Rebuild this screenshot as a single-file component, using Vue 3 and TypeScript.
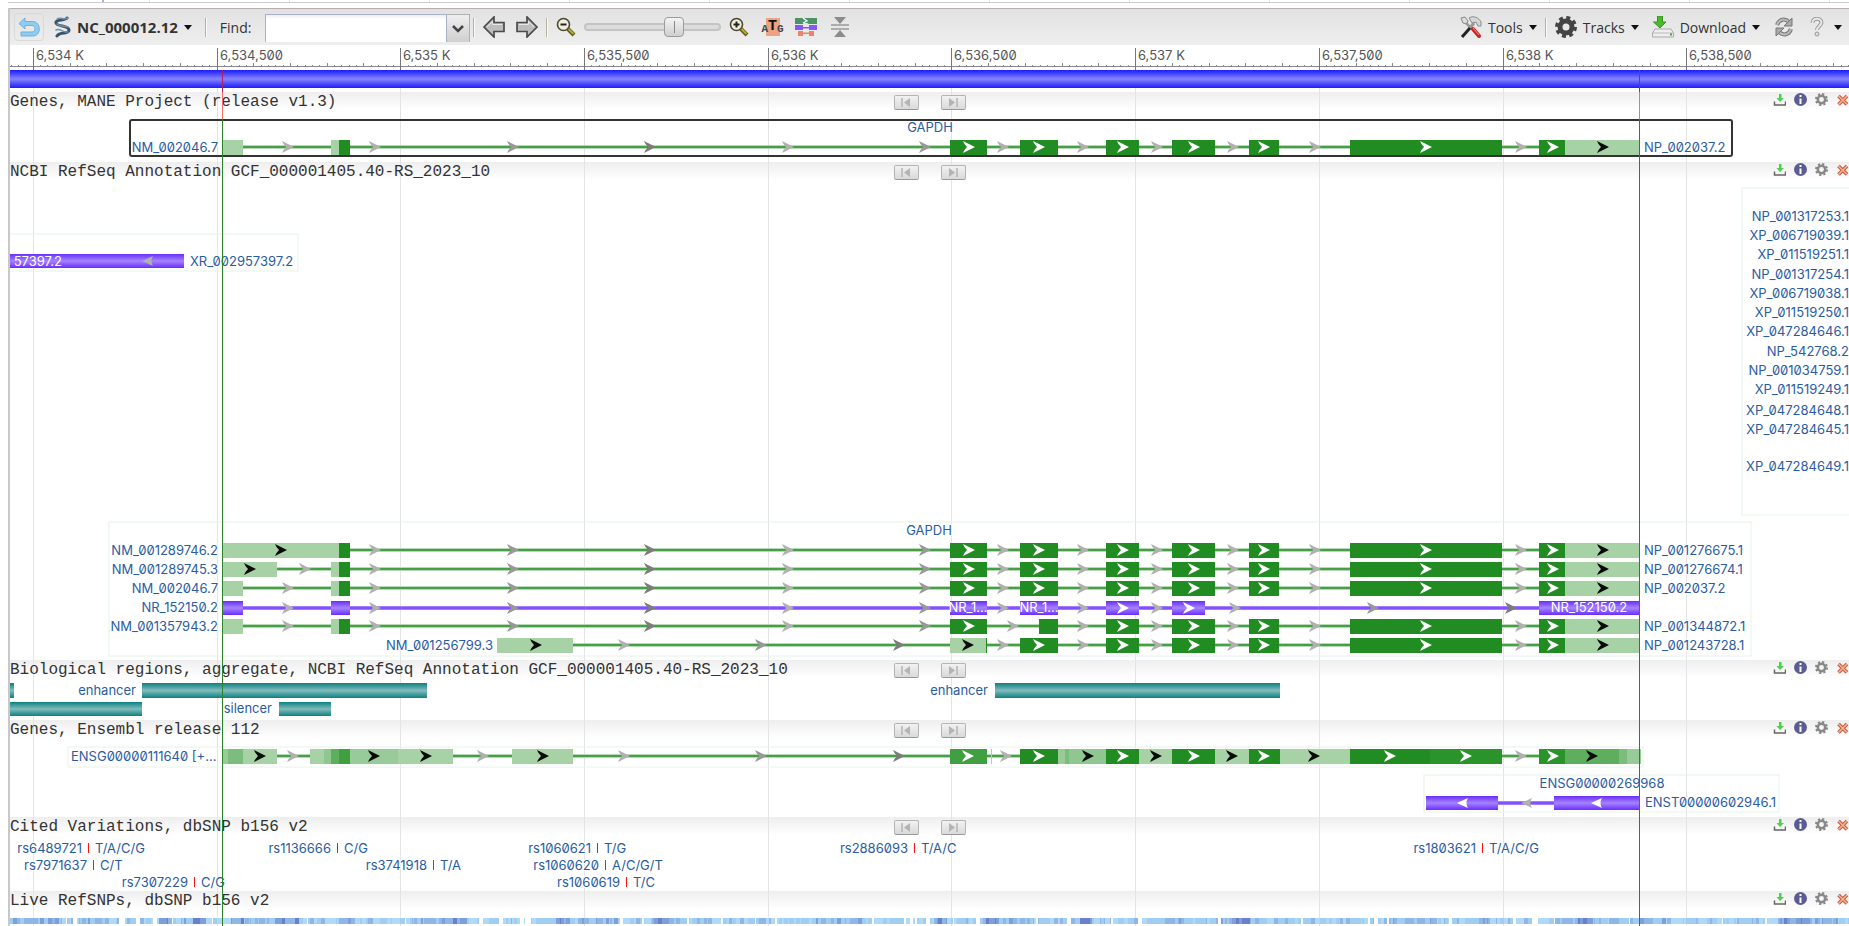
<script setup lang="ts">
import { computed, onBeforeUnmount, onMounted, ref } from 'vue'

type Fill = 'utr' | 'cds' | 'nc' | 'teal' | 'd1' | 'd2' | 'd3' | 'd4' | 'd5' | 'd6'
type ArrowKind = 'white' | 'black' | 'soft' | 'mid' | 'deep'
type Block = [from: number, to: number, fill: Fill]
type Arrow = [x: number, kind: ArrowKind]

interface Feature {
  y: number
  h: number
  line?: [number, number]
  lineKind?: 'green' | 'purple'
  back?: boolean
  blocks: Block[]
  arrows: Arrow[]
}
interface Label {
  x: number
  y: number
  text: string
  anchor?: 'start' | 'middle' | 'end'
  light?: boolean
}
interface Frame {
  x: number
  y: number
  to: number
  h: number
  strong?: boolean
}
interface Track {
  id: string
  title: string
  top: number
  body: number
  nav: boolean
  frames: Frame[]
  features: Feature[]
  labels: Label[]
  marks: { x: number; y: number }[]
}

const LEFT = 10
const BASE = 1839
const width = ref(window.innerWidth - LEFT)
const measure = () => {
  width.value = window.innerWidth - LEFT
}
onMounted(() => window.addEventListener('resize', measure))
onBeforeUnmount(() => window.removeEventListener('resize', measure))

const sx = (x: number) => Math.round(((x - LEFT) * width.value) / BASE)

const query = ref('')
const zoom = ref(69)

const rulerNames = [
  '6,534 K', '6,534,500', '6,535 K', '6,535,500', '6,536 K',
  '6,536,500', '6,537 K', '6,537,500', '6,538 K', '6,538,500',
]
const ORIGIN = 32.8
const STEP = 183.72
const majors = computed(() => rulerNames.map((name, i) => ({ name, x: sx(ORIGIN + STEP * i) })))
const minors = computed(() => {
  const out: { x: number; tall: boolean }[] = []
  for (let i = -3; i < 250; i++) {
    const x = ORIGIN + (STEP / 25) * i
    if (x > LEFT && x < LEFT + BASE) out.push({ x: sx(x), tall: i % 5 === 0 })
  }
  return out
})

const introns: Arrow[] = [[369, 'soft'], [507, 'mid'], [644, 'deep'], [782, 'soft'], [919, 'mid']]
const tailBlocks: Block[] = [
  [1106, 1139, 'cds'], [1172, 1215, 'cds'], [1249, 1279, 'cds'],
  [1350, 1502, 'cds'], [1539, 1565, 'cds'], [1565, 1639, 'utr'],
]
const tailArrows: Arrow[] = [
  [1077, 'soft'], [1117, 'white'], [1151, 'soft'], [1188, 'white'], [1227, 'soft'],
  [1258, 'white'], [1309, 'soft'], [1420, 'white'], [1515, 'soft'], [1547, 'white'], [1597, 'black'],
]
const midBlocks: Block[] = [[950, 987, 'cds'], [1020, 1058, 'cds']]
const midArrows: Arrow[] = [[963, 'white'], [997, 'soft'], [1033, 'white']]
const startSplit: Block[] = [[331, 339, 'utr'], [339, 350, 'cds']]

const gene = (y: number, head: Block[], headArrows: Arrow[], mid = midBlocks, midA = midArrows): Feature => ({
  y,
  h: 15,
  line: [223, 1639],
  lineKind: 'green',
  blocks: [...head, ...mid, ...tailBlocks],
  arrows: [...headArrows, ...introns, ...midA, ...tailArrows],
})

const accession = (x: number, y: number, text: string, anchor: 'start' | 'end' = 'end'): Label => ({ x, y, text, anchor })

const edgeLabels: [number, string][] = [
  [221, 'NP_001317253.1'], [240, 'XP_006719039.1'], [259, 'XP_011519251.1'], [279, 'NP_001317254.1'],
  [298, 'XP_006719038.1'], [317, 'XP_011519250.1'], [336, 'XP_047284646.1'], [356, 'NP_542768.2'],
  [375, 'NP_001034759.1'], [394, 'XP_011519249.1'], [415, 'XP_047284648.1'], [434, 'XP_047284645.1'],
  [471, 'XP_047284649.1'],
]

const snps: [string, number, string, number][] = [
  ['rs6489721', 88, 'T/A/C/G', 0], ['rs7971637', 93, 'C/T', 1], ['rs7307229', 194, 'C/G', 2],
  ['rs1136666', 337, 'C/G', 0], ['rs3741918', 433, 'T/A', 1], ['rs1060621', 597, 'T/G', 0],
  ['rs1060620', 605, 'A/C/G/T', 1], ['rs1060619', 626, 'T/C', 2], ['rs2886093', 914, 'T/A/C', 0],
  ['rs1803621', 1482, 'T/A/C/G', 0],
]
const snpRows = [853, 870, 887]

const tracks: Track[] = [
  {
    id: 'mane', title: 'Genes, MANE Project (release v1.3)', top: 110, body: 52, nav: true,
    frames: [{ x: 130, y: 120, to: 1732, h: 36, strong: true }],
    features: [gene(140, [[223, 243, 'utr'], ...startSplit], [[282, 'soft']])],
    labels: [
      { x: 930, y: 132, text: 'GAPDH', anchor: 'middle' },
      accession(218, 152, 'NM_002046.7'), accession(1644, 152, 'NP_002037.2', 'start'),
    ],
    marks: [],
  },
  {
    id: 'refseq', title: 'NCBI RefSeq Annotation GCF_000001405.40-RS_2023_10', top: 180, body: 480, nav: true,
    frames: [
      { x: 0, y: 234, to: 298, h: 37 },
      { x: 109, y: 522, to: 1751, h: 134 },
      { x: 1742, y: 188, to: 1860, h: 327 },
    ],
    features: [
      { y: 254, h: 14, back: true, blocks: [[10, 184, 'nc']], arrows: [[142, 'soft']] },
      gene(543, [[223, 339, 'utr'], [339, 350, 'cds']], [[275, 'black']]),
      gene(562, [[223, 277, 'utr'], ...startSplit], [[244, 'black'], [299, 'soft']]),
      gene(581, [[223, 243, 'utr'], ...startSplit], [[282, 'soft']]),
      {
        y: 601, h: 14, line: [223, 1639], lineKind: 'purple',
        blocks: [
          [223, 243, 'nc'], [331, 350, 'nc'], [950, 987, 'nc'], [1020, 1058, 'nc'],
          [1106, 1139, 'nc'], [1172, 1205, 'nc'], [1539, 1639, 'nc'],
        ],
        arrows: [
          [282, 'soft'], ...introns, [997, 'soft'], [1077, 'soft'], [1117, 'white'], [1151, 'soft'],
          [1183, 'white'], [1229, 'soft'], [1367, 'mid'], [1505, 'deep'],
        ],
      },
      gene(619, [[223, 243, 'utr'], ...startSplit], [[282, 'soft']],
        [[950, 987, 'cds'], [1039, 1058, 'cds']], [[963, 'white'], [1007, 'soft']]),
      {
        y: 638, h: 15, line: [573, 1639], lineKind: 'green',
        blocks: [[497, 573, 'utr'], [950, 986, 'utr'], [986, 987, 'cds'], [1020, 1058, 'cds'], ...tailBlocks],
        arrows: [
          [530, 'black'], [618, 'soft'], [755, 'mid'], [893, 'deep'], [962, 'black'],
          [997, 'soft'], [1033, 'white'], ...tailArrows,
        ],
      },
    ],
    labels: [
      { x: 62, y: 266, text: '57397.2', anchor: 'end', light: true },
      accession(190, 266, 'XR_002957397.2', 'start'),
      ...edgeLabels.map(([y, text]) => accession(1849, y, text)),
      { x: 929, y: 535, text: 'GAPDH', anchor: 'middle' },
      accession(218, 555, 'NM_001289746.2'), accession(218, 574, 'NM_001289745.3'),
      accession(218, 593, 'NM_002046.7'), accession(218, 612, 'NR_152150.2'),
      accession(218, 631, 'NM_001357943.2'), accession(493, 650, 'NM_001256799.3'),
      accession(1644, 555, 'NP_001276675.1', 'start'), accession(1644, 574, 'NP_001276674.1', 'start'),
      accession(1644, 593, 'NP_002037.2', 'start'), accession(1644, 631, 'NP_001344872.1', 'start'),
      accession(1644, 650, 'NP_001243728.1', 'start'),
      { x: 968, y: 612, text: 'NR_1...', anchor: 'middle', light: true },
      { x: 1039, y: 612, text: 'NR_1...', anchor: 'middle', light: true },
      { x: 1589, y: 612, text: 'NR_152150.2', anchor: 'middle', light: true },
    ],
    marks: [],
  },
  {
    id: 'bio', title: 'Biological regions, aggregate, NCBI RefSeq Annotation GCF_000001405.40-RS_2023_10',
    top: 678, body: 42, nav: true, frames: [],
    features: [
      { y: 683, h: 15, blocks: [[10, 14, 'teal'], [142, 427, 'teal'], [995, 1280, 'teal']], arrows: [] },
      { y: 702, h: 14, blocks: [[10, 142, 'teal'], [279, 331, 'teal']], arrows: [] },
    ],
    labels: [accession(136, 695, 'enhancer'), accession(272, 713, 'silencer'), accession(988, 695, 'enhancer')],
    marks: [],
  },
  {
    id: 'ensembl', title: 'Genes, Ensembl release 112', top: 738, body: 79, nav: true,
    frames: [{ x: 68, y: 747, to: 1643, h: 20 }, { x: 1424, y: 775, to: 1779, h: 37 }],
    features: [
      {
        y: 749, h: 15, line: [222, 1639], lineKind: 'green',
        blocks: [
          [222, 228, 'd6'], [228, 243, 'd4'], [243, 277, 'utr'], [310, 324, 'utr'], [324, 331, 'd5'],
          [331, 339, 'd3'], [339, 350, 'd2'], [350, 398, 'd6'], [398, 453, 'utr'], [512, 573, 'utr'],
          [950, 987, 'd2'], [991, 992, 'utr'], [1020, 1058, 'cds'], [1058, 1065, 'd6'], [1065, 1069, 'd4'],
          [1069, 1106, 'd5'], [1106, 1139, 'cds'], [1139, 1172, 'utr'], [1172, 1215, 'cds'],
          [1215, 1249, 'utr'], [1249, 1280, 'cds'], [1280, 1350, 'utr'], [1350, 1430, 'cds'],
          [1430, 1502, 'd1'], [1539, 1565, 'd1'], [1565, 1619, 'd3'], [1619, 1627, 'd4'], [1627, 1641, 'd6'],
        ],
        arrows: [
          [254, 'black'], [287, 'soft'], [368, 'black'], [420, 'black'], [477, 'soft'], [537, 'black'],
          [618, 'soft'], [755, 'mid'], [893, 'deep'], [962, 'white'], [1000, 'soft'], [1033, 'white'],
          [1082, 'black'], [1117, 'white'], [1150, 'black'], [1188, 'white'], [1226, 'black'],
          [1258, 'white'], [1308, 'black'], [1384, 'white'], [1460, 'white'], [1515, 'soft'],
          [1547, 'white'], [1586, 'black'],
        ],
      },
      {
        y: 796, h: 14, back: true, line: [1426, 1639], lineKind: 'purple',
        blocks: [[1426, 1498, 'nc'], [1554, 1639, 'nc']],
        arrows: [[1457, 'white'], [1521, 'soft'], [1591, 'white']],
      },
    ],
    labels: [
      accession(71, 761, 'ENSG00000111640 [+...', 'start'),
      { x: 1602, y: 788, text: 'ENSG00000269968', anchor: 'middle' },
      accession(1645, 807, 'ENST00000602946.1', 'start'),
    ],
    marks: [],
  },
  {
    id: 'cited', title: 'Cited Variations, dbSNP b156 v2', top: 835, body: 56, nav: true,
    frames: [], features: [],
    labels: snps.flatMap(([id, x, alleles, row]) => [
      accession(x - 6, snpRows[row], id), accession(x + 7, snpRows[row], alleles, 'start'),
    ]),
    marks: snps.map(([, x, , row]) => ({ x, y: snpRows[row] - 10 })),
  },
  {
    id: 'live', title: 'Live RefSNPs, dbSNP b156 v2', top: 909, body: 17, nav: false,
    frames: [], features: [], labels: [], marks: [],
  },
]

// Density strip: a seeded generator keeps the shades stable between renders.
const peaks = [52, 164, 199, 235, 281, 290, 345, 459, 560, 660, 940, 990, 1085, 1238, 1242, 1482, 1583, 1784, 1800]
const density = computed(() => {
  let seed = 90210
  const rand = () => {
    seed = (seed * 1103515245 + 12345) % 2147483648
    return seed / 2147483648
  }
  const shades = ['#afd9f7', '#a0cdf2', '#90b6e8', '#7f9fdc', '#6a80cc']
  const cells: { x: number; w: number; fill: string }[] = []
  let x = LEFT
  while (x < LEFT + BASE) {
    const w = 1 + Math.floor(rand() * 4)
    const near = peaks.some((p) => Math.abs(p - x) < 7)
    const wave = Math.sin(x / 31) + Math.sin(x / 13)
    const r = rand()
    if (r > 0.1 || near || wave > 0.6) {
      let level = Math.floor(rand() * 2.4) + (wave > 0.5 ? 1 : 0) + (near ? 2 : 0)
      level = Math.min(level, 4)
      cells.push({ x: sx(x), w: Math.max(1, sx(x + w) - sx(x)), fill: shades[level] })
    }
    x += w
  }
  return cells
})

const arrowPath = (x: number, cy: number, back?: boolean) =>
  back
    ? `M${x + 11} ${cy - 5}L${x} ${cy}l11 5q-3 -5 0 -10z`
    : `M${x} ${cy - 6}L${x + 12} ${cy}L${x} ${cy + 6}q1 -3 4 -6q-3 -3 -4 -6z`

const trackTools = ['Download track data', 'Track information', 'Track settings', 'Close track']
</script>

<template>
  <div class="viewer">
    <div class="strip"></div>
    <main class="panel">
      <div class="toolbar" role="toolbar" aria-label="Sequence viewer">
        <button class="undo" aria-label="Undo">
          <svg width="22" height="20" viewBox="0 0 22 20">
            <path d="M7 1L1 6.500L7 12V8.500H14C18 8.500 18 15 14 15H3V19H15C23.500 19 23.500 4.500 14.500 4.500H7Z" fill="#8fcdf0" stroke="#73afd9" />
          </svg>
        </button>
        <button class="menu seq">
          <svg width="18" height="22" viewBox="0 0 18 22" fill="none" stroke-linecap="round">
            <path d="M14 2C12 5 2 3 3 7S16 9 16 14S7 15 4 20" stroke="#36536f" stroke-width="3" />
            <path d="M4 3C7 1 11 4 15 2M4 8C8 12 12 9 15 11M3 14C7 12 11 17 15 16" stroke="#7890a5" stroke-width="1.500" />
          </svg>
          <b>NC_000012.12</b><i class="caret"></i>
        </button>
        <span class="sep"></span>
        <label for="find" class="find">Find:</label>
        <div class="combo">
          <input id="find" v-model="query" type="text" />
          <button aria-label="Show recent searches">
            <svg width="12" height="8" viewBox="0 0 12 8"><path d="M1 1L6 6L11 1" fill="none" stroke="#444" stroke-width="2.500" /></svg>
          </button>
        </div>
        <span class="sep near"></span>
        <button class="icon pan" aria-label="Pan left">
          <svg width="22" height="22" viewBox="0 0 22 22"><path d="M1 11L11 1V6.500H21V15.500H11V21Z" fill="#bdbdbd" stroke="#4b4b4b" stroke-width="1.700" /><path d="M4 11L9.500 5.500V8.500H19" fill="none" stroke="#e8e8e8" /></svg>
        </button>
        <button class="icon pan-right" aria-label="Pan right">
          <svg width="22" height="22" viewBox="0 0 22 22"><path d="M21 11L11 1V6.500H1V15.500H11V21Z" fill="#bdbdbd" stroke="#4b4b4b" stroke-width="1.700" /><path d="M3 8.500H12.500V5.500L18 11" fill="none" stroke="#e8e8e8" /></svg>
        </button>
        <span class="sep mid"></span>
        <button class="icon zoom-btn" aria-label="Zoom out">
          <svg width="20" height="20" viewBox="0 0 20 20"><path d="M12 12L18 18" stroke="#5c5710" stroke-width="4" /><path d="M12.500 12L17.500 17" stroke="#b7ad35" stroke-width="2" /><circle cx="7.500" cy="7.500" r="6" fill="#f1efdc" stroke="#4a4934" stroke-width="1.600" /><path d="M4.500 7.500H10.500" stroke="#222" stroke-width="2" /></svg>
        </button>
        <input v-model="zoom" class="slider" type="range" min="0" max="100" aria-label="Zoom level" />
        <button class="icon" aria-label="Zoom in">
          <svg width="20" height="20" viewBox="0 0 20 20"><path d="M12 12L18 18" stroke="#5c5710" stroke-width="4" /><path d="M12.500 12L17.500 17" stroke="#b7ad35" stroke-width="2" /><circle cx="7.500" cy="7.500" r="6" fill="#f1efdc" stroke="#4a4934" stroke-width="1.600" /><path d="M4.500 7.500H10.500M7.500 4.500V10.500" stroke="#222" stroke-width="2" /></svg>
        </button>
        <button class="icon atg" aria-label="Show sequence">
          <span>A</span><strong>T</strong><span>G</span>
        </button>
        <button class="icon" aria-label="Show features">
          <svg width="22" height="18" viewBox="0 0 22 18"><path d="M0 0H22V6H14L12 5H9L8 6H0Z" fill="#4a9468" /><path d="M8 0L12 3L8 5" fill="none" stroke="#fff" stroke-width="1.300" /><path d="M0 7H8V9H14V7H22V12H14V10.500H8V12H0Z" fill="#8557fb" /><path d="M3 13H8V14.500H14V13H19V18H14V16H8V18H3Z" fill="#ec8567" /></svg>
        </button>
        <button class="icon collapse" aria-label="Collapse tracks">
          <svg width="18" height="20" viewBox="0 0 18 20"><path d="M3 0H15L9 7ZM3 20H15L9 13Z" fill="#8c8c8c" /><path d="M0 8H18M0 12H18" stroke="#999" stroke-width="1.500" /></svg>
        </button>
        <span class="spacer"></span>
        <button class="menu">
          <svg width="22" height="22" viewBox="0 0 22 22">
            <path d="M9 2C14 -1 19 2 21 6V10H18L16 6L12 7Z" fill="#d6d6d6" stroke="#8b8b8b" />
            <path d="M1 2L5 1L8 5L7 8L3 7Z" fill="#ddd" stroke="#888" /><path d="M6 7L12 13" stroke="#999" stroke-width="2.500" />
            <path d="M14 7L9 13" stroke="#999" stroke-width="3" />
            <path d="M13 13L19 20" stroke="#c22" stroke-width="4" stroke-linecap="round" /><path d="M13 12L19 19" stroke="#f88" />
            <path d="M2 21L10 12" stroke="#222" stroke-width="3" />
          </svg>
          <span>Tools</span><i class="caret"></i>
        </button>
        <span class="sep right"></span>
        <button class="menu tracks-menu">
          <svg width="22" height="22" viewBox="0 0 22 22"><circle cx="11" cy="11" r="9" fill="none" stroke="#444" stroke-width="4" stroke-dasharray="3.770 3.300" /><circle cx="11" cy="11" r="6" fill="none" stroke="#444" stroke-width="5" /></svg>
          <span>Tracks</span><i class="caret"></i>
        </button>
        <button class="menu">
          <svg width="22" height="22" viewBox="0 0 22 22"><path d="M3 13H19L21.500 17V21H.500V17Z" fill="#eee" stroke="#aaa" /><path d="M1 17H21" stroke="#bbb" /><path d="M18 18.500H20" stroke="#3a3" stroke-width="2" /><path d="M5.500 0H10.500V6H14L8 12L1.500 6H5.500Z" fill="#4db82e" stroke="#38931f" /></svg>
          <span>Download</span><i class="caret"></i>
        </button>
        <button class="icon reload" aria-label="Refresh">
          <svg width="20" height="20" viewBox="0 0 20 20" fill="none"><path d="M3 8C5 2 11 1 15 5M17 12C15 18 9 19 5 15" stroke="#777" stroke-width="4" /><path d="M3 8C5 2 11 1 15 5M17 12C15 18 9 19 5 15" stroke="#bbb" stroke-width="2" /><path d="M18 1V9H10ZM2 19V11H10Z" fill="#aaa" stroke="#777" /></svg>
        </button>
        <button class="menu help" aria-label="Help">
          <svg width="14" height="20" viewBox="0 0 14 20" fill="none"><path d="M2.500 6C2.500 0 11.500 1 11.500 5.500C11.500 9 7 9 7 13" stroke="#999" stroke-width="4" /><path d="M2.500 6C2.500 0 11.500 1 11.500 5.500C11.500 9 7 9 7 13" stroke="#e9e9e9" stroke-width="2" /><circle cx="7" cy="17" r="2" fill="#ddd" stroke="#999" /></svg>
          <i class="caret"></i>
        </button>
      </div>

      <svg class="ruler" width="100%" height="25">
        <rect x="0" y="21" width="100%" height="1" fill="#888" />
        <rect v-for="(m, i) in minors" :key="'m' + i" :x="m.x" :y="m.tall ? 18 : 20" width="1" :height="m.tall ? 3 : 1" fill="#888" />
        <g v-for="m in majors" :key="m.name">
          <rect :x="m.x" y="3" width="1" height="22" fill="#777" />
          <text :x="m.x + 3" y="15">{{ m.name }}</text>
        </g>
      </svg>

      <div class="stage">
        <svg class="grid" width="100%" height="100%" aria-hidden="true">
          <rect v-for="m in majors" :key="m.name" :x="m.x" y="0" width="1" height="100%" fill="#e4e4e6" />
        </svg>
        <div class="sequence"></div>

        <section v-for="t in tracks" :key="t.id" class="track">
          <header>
            <h2>{{ t.title }}</h2>
            <div class="nav">
              <template v-if="t.nav">
                <button aria-label="Previous feature"><svg width="10" height="9" viewBox="0 0 10 9"><path d="M1 0V9" stroke="#b4b4b4" stroke-width="1.500" /><path d="M9 0V9L3 4.500Z" fill="#b4b4b4" /></svg></button>
                <button aria-label="Next feature"><svg width="10" height="9" viewBox="0 0 10 9"><path d="M9 0V9" stroke="#b4b4b4" stroke-width="1.500" /><path d="M1 0V9L7 4.500Z" fill="#b4b4b4" /></svg></button>
              </template>
            </div>
            <div class="tools">
              <button v-for="(name, i) in trackTools" :key="name" :aria-label="name">
                <svg width="13" height="13" viewBox="0 0 13 13">
                  <template v-if="i === 0"><path d="M6 1H8.500V5H11L7 9L3.500 5H6Z" fill="#4fcf4f" /><path d="M1.500 8.500V12H12.500V8.500" fill="none" stroke="#666" stroke-width="1.500" /></template>
                  <template v-else-if="i === 1"><circle cx="6.500" cy="6.500" r="6.500" fill="#5c5c94" /><path d="M6.500 5.500V11M6.500 2V4" stroke="#fff" stroke-width="2" /></template>
                  <template v-else-if="i === 2"><circle cx="6.500" cy="6.500" r="5.500" fill="none" stroke="#888" stroke-width="2" stroke-dasharray="2.160 2.160" /><circle cx="6.500" cy="6.500" r="3.700" fill="none" stroke="#888" stroke-width="2.500" /></template>
                  <template v-else><path d="M2.500 3L11 11.500M11 3L2.500 11.500" stroke="#c8553f" stroke-width="3.600" /><path d="M2.500 3L11 11.500M11 3L2.500 11.500" stroke="#f6b48c" stroke-width="1.600" /></template>
                </svg>
              </button>
            </div>
          </header>

          <svg class="canvas" width="100%" :height="t.body">
            <defs v-if="t.id === 'mane'">
              <linearGradient id="fill-nc" x2="0" y2="1"><stop offset="0" stop-color="#6a2cff" /><stop offset="0.5" stop-color="#a684ff" /><stop offset="1" stop-color="#6a2cff" /></linearGradient>
              <linearGradient id="fill-teal" x2="0" y2="1"><stop offset="0" stop-color="#0d8080" /><stop offset="0.5" stop-color="#80bcbc" /><stop offset="1" stop-color="#0d8080" /></linearGradient>
            </defs>
            <g :transform="`translate(0 ${-t.top})`">
              <g v-for="(f, i) in t.features" :key="'f' + i">
                <template v-if="f.line">
                  <rect :class="['halo', f.lineKind]" :x="sx(f.line[0])" :y="f.y + 5" :width="sx(f.line[1]) - sx(f.line[0])" height="4" />
                  <rect :class="['core', f.lineKind]" :x="sx(f.line[0])" :y="f.y + 6" :width="sx(f.line[1]) - sx(f.line[0])" height="2" />
                </template>
                <rect v-for="(b, j) in f.blocks" :key="'b' + j" :class="b[2]" :x="sx(b[0])" :y="f.y" :width="sx(b[1]) - sx(b[0])" :height="f.h" />
                <path v-for="(a, j) in f.arrows" :key="'a' + j" :class="'a-' + a[1]" :d="arrowPath(sx(a[0]), f.y + 7, f.back)" />
              </g>
              <text
                v-for="(l, i) in t.labels" :key="'l' + i" :class="l.light ? 'label light' : 'label'"
                :x="sx(l.x)" :y="l.y" :text-anchor="l.anchor"
              >{{ l.text }}</text>
              <rect
                v-for="(f, i) in t.frames" :key="'r' + i" :class="f.strong ? 'frame strong' : 'frame'"
                :x="sx(f.x)" :y="f.y" :width="sx(f.to) - sx(f.x)" :height="f.h" :rx="f.strong ? 2 : 0"
              />
              <rect v-for="(m, i) in t.marks" :key="'k' + i" :x="sx(m.x)" :y="m.y" width="1" height="10" fill="#f11" />
              <template v-if="t.id === 'live'">
                <rect v-for="(c, i) in density" :key="'d' + i" :x="c.x" y="918" :width="c.w" height="6" :fill="c.fill" />
              </template>
            </g>
          </svg>
        </section>

        <svg class="cursors" width="100%" height="100%" aria-hidden="true">
          <g v-for="x in [222, 1639]" :key="x">
            <rect :x="sx(x)" y="0" width="1" height="22" fill="#b02060" />
            <rect :x="sx(x)" y="22" width="1" height="27" fill="#ff6b6b" />
            <rect :x="sx(x)" y="49" width="1" height="100%" fill="#2a832a" />
          </g>
        </svg>
      </div>
    </main>
  </div>
</template>

<style>
body {
  margin: 0;
  background: #fff;
  overflow-x: hidden;
}
</style>

<style scoped>
.viewer {
  font-family: "Open Sans", "Noto Sans", sans-serif;
  font-size: 14px;
  color: #333;
  padding-left: 8px;
}
.strip {
  height: 8px;
  background:
    linear-gradient(#ccc, #ccc) 0 2px / 100% 1px no-repeat,
    linear-gradient(#aaaaff, #aaaaff) 94px 0 / 2px 2px no-repeat,
    repeating-linear-gradient(90deg, #e2e2e2 0 1px, transparent 1px 140px) 141px 0 / 100% 2px no-repeat;
}
.panel {
  border-left: 2px solid #c8c8c8;
}
button {
  font: inherit;
  color: inherit;
  border: 0;
  padding: 0;
  background: none;
  cursor: pointer;
}
svg {
  display: block;
}
.toolbar {
  display: flex;
  align-items: center;
  height: 36px;
  padding: 0 7px 0 4px;
  border-top: 1px solid #b8aeb2;
  background: linear-gradient(#e2e2e2, #eeeeee);
  white-space: nowrap;
}
.undo {
  display: flex;
  align-items: center;
  justify-content: center;
  width: 30px;
  height: 28px;
  border: 1px solid #d9d9d9;
  border-radius: 4px;
}
.menu {
  display: flex;
  align-items: center;
  gap: 6px;
}
.seq {
  margin-left: 9px;
  font-size: 15px;
}
.seq b {
  font-weight: 700;
}
.caret {
  border: 4px solid transparent;
  border-top: 5px solid #111;
  border-bottom: 0;
}
.sep {
  width: 1px;
  height: 19px;
  margin: 0 13px;
  background: #b5b19c;
  border-right: 1px solid #fafafa;
}
.sep.near {
  margin: 0 8px 0 3px;
}
.sep.mid,
.sep.right {
  margin: 0 8px;
}
.combo {
  display: flex;
  align-self: stretch;
  height: 28px;
  margin: 5px 0 0 14px;
}
.combo input {
  box-sizing: border-box;
  width: 182px;
  border: 1px solid #a9b2c4;
  border-bottom: 0;
  padding: 2px 6px;
  font: inherit;
  outline: 0;
  background: linear-gradient(#eee, #fff 4px);
}
.combo button {
  display: flex;
  align-items: center;
  justify-content: center;
  box-sizing: border-box;
  width: 23px;
  border: 1px solid #b0b0b0;
  border-left: 0;
  border-bottom: 0;
  background: linear-gradient(#efefef, #cfcfcf);
}
.pan-right {
  margin-left: 11px;
}
.slider {
  appearance: none;
  width: 137px;
  height: 22px;
  margin: 0 8px;
  background: none;
}
.slider::-webkit-slider-runnable-track {
  height: 8px;
  box-sizing: border-box;
  border: 2px solid #c4c4c4;
  border-radius: 4px;
  background: #dcdcdc;
}
.slider::-webkit-slider-thumb {
  appearance: none;
  width: 20px;
  height: 20px;
  margin-top: -8px;
  border: 1px solid #9b9b9b;
  border-radius: 4px;
  background:
    linear-gradient(#888, #888) center / 1px 12px no-repeat,
    linear-gradient(#f4f4f4, #cfcfcf);
}
.atg {
  display: flex;
  align-items: flex-end;
  height: 18px;
  margin: 0 11px 0 12px;
  color: #444;
  background: linear-gradient(#eba384, #eba384) center / 14px 18px no-repeat;
  font-family: "Liberation Mono", monospace;
  font-weight: 700;
  font-size: 11px;
  line-height: 14px;
}
.atg strong {
  color: #111;
  font-size: 15px;
  line-height: 18px;
}
.collapse {
  margin-left: 14px;
}
.spacer {
  flex: 1;
}
.tracks-menu {
  margin-right: 13px;
}
.reload {
  margin: 0 16px 0 14px;
}
.help {
  gap: 10px;
}
.ruler text,
.label {
  font-family: Inter, sans-serif;
  font-size: 13px;
  font-feature-settings: "zero";
}
.ruler text {
  fill: #555;
}
.stage {
  position: relative;
}
.grid,
.cursors {
  position: absolute;
  inset: 0;
}
.cursors {
  z-index: 2;
  pointer-events: none;
}
.sequence {
  position: relative;
  height: 18px;
  margin-bottom: 4px;
  background: linear-gradient(#1c1cff, #4444fc 20%, #8585fb 50%, #4444fc 80%, #1c1cff);
}
.track {
  background: linear-gradient(#eeeeee, #fff 18px);
}
header {
  position: relative;
  z-index: 1;
  display: grid;
  grid-template-columns: 1fr auto 1fr;
  height: 18px;
}
h2 {
  margin: 0;
  font: 400 16px/20px "Liberation Mono", monospace;
  color: #333;
  white-space: nowrap;
}
.nav {
  display: flex;
  gap: 22px;
  padding-top: 3px;
}
.nav button {
  display: flex;
  align-items: center;
  justify-content: center;
  box-sizing: border-box;
  width: 25px;
  height: 15px;
  border: 1px solid #b4b4b4;
  border-bottom-color: #999;
  border-radius: 2px;
  background: linear-gradient(#f2f2f2, #d9d9d9);
}
.tools {
  display: flex;
  justify-content: flex-end;
  align-items: flex-start;
  gap: 8px;
  padding-top: 1px;
}
.canvas {
  position: relative;
  z-index: 1;
}
.frame {
  fill: none;
  stroke: #e6f4e6;
  stroke-width: 1px;
}
.frame.strong {
  stroke: #333;
  stroke-width: 2px;
}
.label {
  fill: #2a5ca3;
  stroke: #fff;
  stroke-width: 2px;
  paint-order: stroke;
}
.label.light {
  fill: #fff;
  stroke: none;
}
.halo.green { fill: #b5dab5; }
.core.green { fill: #45a045; }
.halo.purple { fill: #a57eff; }
.core.purple { fill: #8250ff; }
.utr { fill: #a6d2a6; }
.cds { fill: #218c21; }
.nc { fill: url(#fill-nc); }
.teal { fill: url(#fill-teal); }
.d1 { fill: #2a932a; }
.d2 { fill: #409f40; }
.d3 { fill: #5eae5e; }
.d4 { fill: #7cbc7c; }
.d5 { fill: #90c690; }
.d6 { fill: #99cb99; }
.a-white { fill: #fff; }
.a-black { fill: #0a0a0a; }
.a-soft { fill: #b0b0b0; }
.a-mid { fill: #989898; }
.a-deep { fill: #7c7c7c; }
</style>
